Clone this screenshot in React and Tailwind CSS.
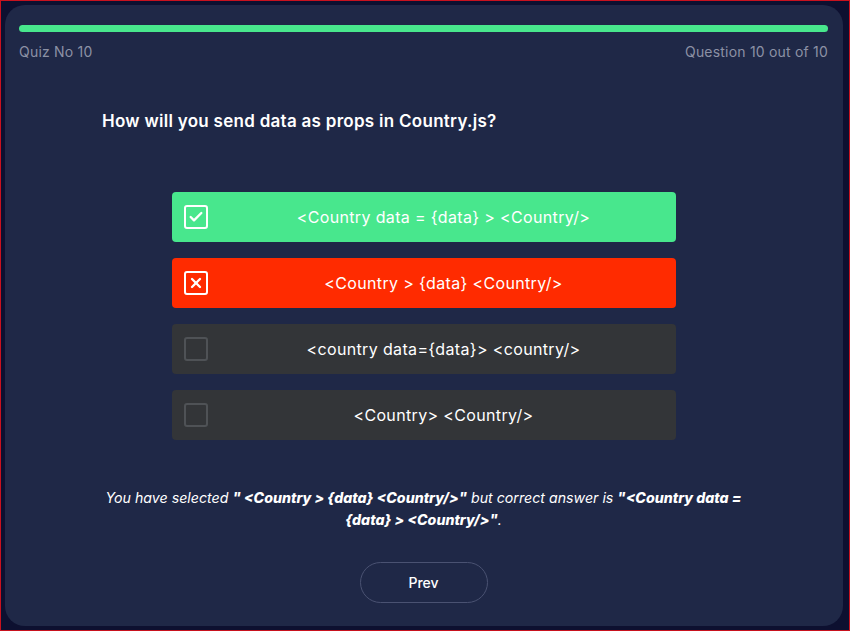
import { Check, X } from "lucide-react"

const options = [
  { text: "<Country data = {data} > <Country/>", state: "correct" },
  { text: "<Country > {data} <Country/>", state: "wrong" },
  { text: "<country data={data}> <country/>", state: "none" },
  { text: "<Country> <Country/>", state: "none" },
]

function Option({ text, state }) {
  const bg =
    state === "correct" ? "bg-[#48e78d]" : state === "wrong" ? "bg-[#ff2b00]" : "bg-[#333538]"
  return (
    <div className={`relative flex h-[50px] w-[504px] items-center justify-center rounded-[4px] pl-[40px] ${bg}`}>
      <div
        className={`absolute left-[12px] top-[13px] flex h-[24px] w-[24px] items-center justify-center rounded-[3px] border-2 ${
          state === "none" ? "border-[#4f5256]" : "border-white"
        }`}
      >
        {state === "correct" && <Check size={16} strokeWidth={3.5} className="text-white" />}
        {state === "wrong" && <X size={16} strokeWidth={3.5} className="text-white" />}
      </div>
      <span className="text-[16px] tracking-[0.35px] text-white">{text}</span>
    </div>
  )
}

export default function App() {
  return (
    <div
      className="h-[631px] w-[850px] border border-[#c8121e] bg-[#0d1030] p-[4px]"
      style={{ fontFamily: "Inter, 'Noto Sans', sans-serif" }}
    >
      <div className="flex h-[621px] w-[838px] flex-col rounded-[20px] bg-[#1f2847] pl-[14px] pr-[15px] pt-[20px]">
        <div className="h-[7px] w-full rounded-full bg-[#48e78d]" />
        <div className="mt-[9px] flex justify-between text-[14px] tracking-[0.2px] text-[#8c91a5]">
          <span>Quiz No 10</span>
          <span>Question 10 out of 10</span>
        </div>
        <h1 className="mt-[47px] pl-[83px] text-[17px] font-semibold tracking-[0.28px] text-white">
          How will you send data as props in Country.js?
        </h1>
        <div className="mt-[57px] flex flex-col items-center gap-[16px]">
          {options.map((o, i) => (
            <Option key={i} {...o} />
          ))}
        </div>
        <p className="mx-auto mt-[47px] w-[700px] text-center text-[14.2px] italic leading-[22px] text-white">
          You have selected <b className="font-extrabold">" &lt;Country &gt; {"{data}"} &lt;Country/&gt;"</b> but
          correct answer is <b className="font-extrabold">"&lt;Country data =</b>
          <br />
          <b className="font-extrabold">{"{data}"} &gt; &lt;Country/&gt;"</b>.
        </p>
        <button className="mx-auto mt-[31px] h-[41px] w-[128px] rounded-full border border-[#4a5272] text-[14px] font-medium text-white">
          Prev
        </button>
      </div>
    </div>
  )
}
